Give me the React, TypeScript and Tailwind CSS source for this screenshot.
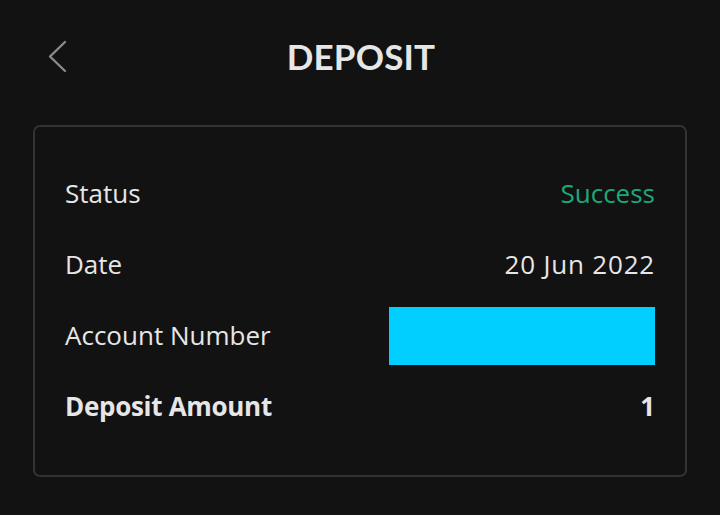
import React from "react";

function Row({ label, children, bold }: { label: string; children: React.ReactNode; bold?: boolean }) {
  return (
    <div className="flex h-[71px] items-center justify-between">
      <span className={`text-[26px] text-[#e6e6e6] ${bold ? "font-bold tracking-[-0.3px]" : "font-normal"}`}>{label}</span>
      {children}
    </div>
  );
}

export default function App() {
  return (
    <div
      className="h-[515px] w-[720px] overflow-hidden bg-[#121212]"
      style={{ fontFamily: "'Open Sans', Lato, sans-serif" }}
    >
      <div className="relative flex h-[112px] items-center justify-center">
        <svg
          className="absolute left-[46px] top-[40px]"
          width="22"
          height="33"
          viewBox="0 0 22 33"
          fill="none"
        >
          <path d="M19 2 L4 16.5 L19 31" stroke="#8a8a8a" strokeWidth="2.4" strokeLinecap="round" strokeLinejoin="round" />
        </svg>
        <h1
          className="pl-[2px] text-[35px] font-bold tracking-[0.2px] text-[#e6e6e6]"
          style={{ fontFamily: "Lato, sans-serif" }}
        >
          DEPOSIT
        </h1>
      </div>
      <div className="mx-[33px] mt-[13px] rounded-[7px] border-2 border-[#333333] px-[30px] pb-[33px] pt-[31px]">
        <Row label="Status">
          <span className="text-[26px] text-[#1ea878]">Success</span>
        </Row>
        <Row label="Date">
          <span className="text-[26px] tracking-[0.8px] text-[#e6e6e6]">20 Jun 2022</span>
        </Row>
        <Row label="Account Number">
          <div className="h-[58px] w-[266px] bg-[#00cfff]" />
        </Row>
        <Row label="Deposit Amount" bold>
          <span className="text-[26px] font-bold text-[#e6e6e6]">1</span>
        </Row>
      </div>
    </div>
  );
}
